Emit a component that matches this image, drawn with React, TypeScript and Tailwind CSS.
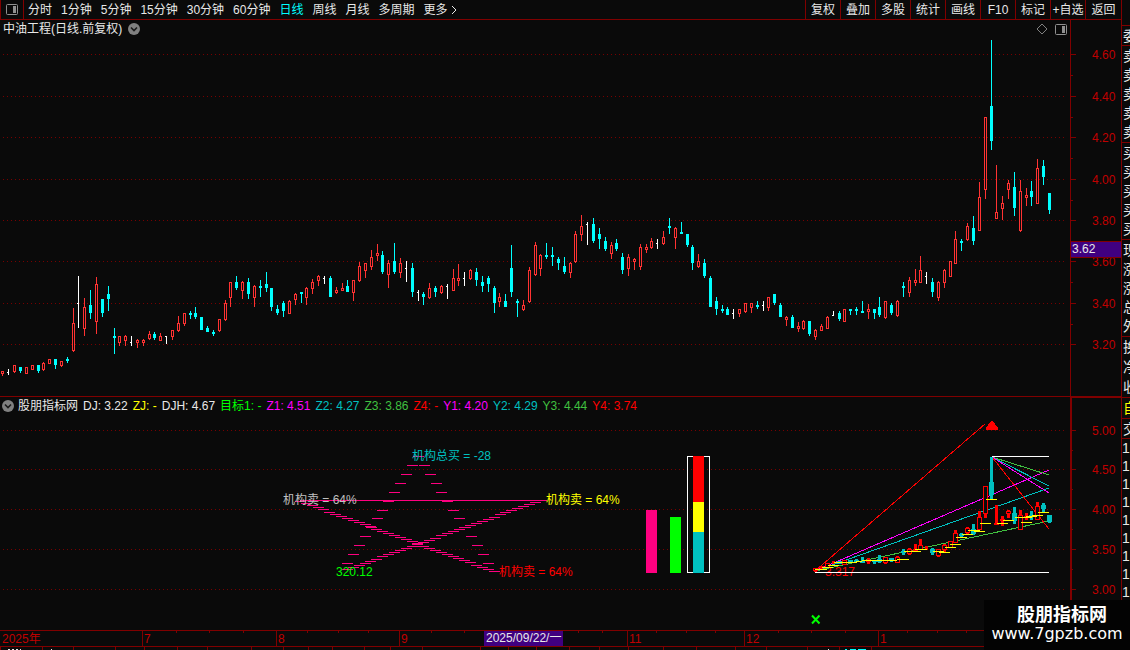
import React, { useState } from 'react';
import clsx from 'clsx';

type Kind = 'up' | 'down' | 'flat';

// x, kind, high, body top, body bottom, low (for flat: high, close, close, low)
type Candle = [number, Kind, number, number, number, number];

const periods = ['分时', '1分钟', '5分钟', '15分钟', '30分钟', '60分钟', '日线', '周线', '月线', '多周期'];
const tools = ['复权', '叠加', '多股', '统计', '画线', 'F10', '标记', '+自选', '返回'];

const candles: Candle[] = [
  [2, 'up', 371, 371, 374, 376], [8, 'flat', 369, 372, 372, 375], [14, 'up', 365, 365, 372, 373],
  [20, 'down', 367, 367, 371, 373], [26, 'up', 367, 367, 374, 374], [32, 'up', 365, 365, 370, 370],
  [38, 'down', 365, 365, 371, 373], [43, 'up', 362, 363, 370, 371], [49, 'up', 359, 359, 364, 364],
  [55, 'down', 359, 359, 365, 369], [61, 'up', 361, 361, 366, 367], [67, 'down', 357, 359, 361, 363],
  [73, 'up', 308, 323, 351, 352], [78, 'flat', 276, 303, 303, 328], [84, 'up', 298, 307, 329, 336],
  [90, 'down', 290, 305, 313, 319], [96, 'up', 277, 284, 322, 334], [102, 'down', 299, 299, 313, 317],
  [108, 'down', 286, 294, 299, 311], [114, 'down', 328, 336, 338, 354], [119, 'up', 336, 336, 343, 346],
  [125, 'up', 335, 336, 341, 346], [131, 'flat', 336, 342, 342, 346], [137, 'up', 339, 340, 343, 348],
  [143, 'up', 339, 340, 343, 346], [149, 'up', 331, 334, 339, 340], [154, 'down', 332, 334, 338, 340],
  [160, 'up', 333, 336, 341, 341], [166, 'flat', 336, 336, 336, 344], [172, 'up', 330, 330, 337, 340],
  [178, 'up', 316, 323, 331, 332], [184, 'up', 313, 313, 324, 326], [190, 'down', 311, 313, 315, 319],
  [195, 'down', 307, 313, 317, 319], [201, 'down', 317, 317, 330, 330], [207, 'down', 326, 328, 332, 332],
  [213, 'down', 330, 332, 334, 336], [219, 'up', 319, 319, 331, 332], [225, 'up', 300, 303, 320, 321],
  [230, 'up', 282, 282, 298, 307], [236, 'down', 276, 282, 288, 290], [242, 'up', 281, 282, 291, 299],
  [248, 'down', 278, 282, 294, 299], [254, 'up', 285, 286, 298, 307], [260, 'down', 280, 286, 288, 297],
  [266, 'down', 272, 284, 288, 292], [271, 'down', 288, 288, 307, 311], [277, 'down', 305, 309, 313, 315],
  [283, 'down', 301, 303, 311, 317], [289, 'up', 300, 301, 314, 314], [295, 'up', 293, 294, 300, 305],
  [301, 'down', 292, 292, 294, 303], [306, 'up', 287, 288, 298, 305], [312, 'up', 279, 282, 289, 294],
  [318, 'up', 275, 276, 281, 286], [324, 'flat', 276, 278, 278, 284], [330, 'down', 276, 278, 297, 297],
  [336, 'up', 287, 290, 293, 294], [342, 'up', 283, 288, 291, 291], [347, 'down', 280, 286, 292, 292],
  [353, 'up', 280, 280, 293, 301], [359, 'up', 262, 266, 281, 282], [365, 'up', 263, 263, 271, 278],
  [371, 'up', 250, 257, 267, 270], [377, 'up', 244, 253, 256, 261], [382, 'down', 251, 255, 272, 274],
  [388, 'up', 260, 263, 275, 288], [394, 'down', 243, 261, 272, 274], [400, 'up', 258, 263, 273, 278],
  [406, 'flat', 261, 268, 268, 282], [412, 'down', 263, 268, 292, 297], [418, 'flat', 290, 292, 292, 301],
  [423, 'down', 292, 294, 297, 305], [429, 'up', 283, 288, 298, 299], [435, 'down', 286, 288, 292, 297],
  [441, 'up', 285, 286, 293, 294], [447, 'flat', 284, 286, 286, 299], [453, 'up', 269, 278, 291, 291],
  [458, 'up', 264, 278, 281, 286], [464, 'flat', 272, 278, 278, 286], [470, 'up', 269, 270, 279, 280],
  [476, 'down', 268, 272, 280, 286], [482, 'down', 276, 282, 286, 292], [488, 'down', 276, 278, 284, 292],
  [494, 'down', 286, 288, 303, 313], [499, 'up', 293, 297, 302, 307], [505, 'down', 294, 301, 307, 307],
  [511, 'down', 245, 268, 292, 297], [517, 'down', 299, 301, 303, 317], [523, 'up', 300, 305, 310, 311],
  [529, 'up', 267, 270, 302, 303], [535, 'up', 242, 245, 275, 276], [540, 'up', 254, 255, 269, 276],
  [546, 'down', 243, 255, 257, 259], [552, 'down', 247, 255, 257, 266], [558, 'down', 257, 259, 263, 270],
  [564, 'down', 257, 266, 272, 274], [570, 'up', 262, 263, 273, 278], [575, 'up', 231, 234, 262, 263],
  [581, 'up', 215, 226, 235, 241], [587, 'flat', 222, 224, 224, 245], [593, 'down', 218, 224, 241, 243],
  [599, 'down', 228, 234, 239, 249], [605, 'down', 237, 241, 249, 251], [611, 'up', 242, 245, 254, 259],
  [616, 'down', 239, 243, 249, 251], [622, 'down', 253, 257, 270, 274], [628, 'up', 254, 257, 269, 276],
  [634, 'up', 258, 259, 262, 270], [640, 'up', 244, 247, 267, 270], [646, 'up', 244, 247, 250, 253],
  [651, 'up', 238, 241, 248, 249], [657, 'flat', 239, 243, 243, 249], [663, 'up', 231, 237, 244, 245],
  [669, 'down', 218, 226, 228, 234], [675, 'up', 227, 228, 238, 249], [681, 'down', 222, 232, 234, 234],
  [687, 'down', 234, 234, 245, 247], [692, 'down', 245, 247, 263, 270], [698, 'up', 254, 261, 267, 268],
  [704, 'down', 259, 263, 276, 278], [710, 'down', 276, 278, 307, 307], [716, 'down', 297, 301, 309, 315],
  [722, 'down', 305, 309, 311, 313], [727, 'down', 307, 309, 315, 315], [733, 'flat', 309, 313, 313, 319],
  [739, 'up', 309, 309, 314, 317], [745, 'up', 303, 303, 312, 313], [751, 'up', 303, 303, 308, 313],
  [757, 'down', 301, 305, 307, 309], [763, 'flat', 301, 305, 305, 311], [768, 'up', 297, 297, 308, 311],
  [774, 'down', 294, 294, 303, 305], [780, 'down', 303, 305, 317, 317], [786, 'up', 316, 317, 320, 326],
  [792, 'down', 315, 317, 328, 328], [798, 'up', 322, 326, 329, 332], [803, 'up', 320, 321, 329, 330],
  [809, 'down', 321, 321, 334, 336], [815, 'up', 329, 330, 337, 340], [821, 'up', 324, 326, 331, 331],
  [827, 'up', 316, 317, 329, 329], [833, 'flat', 311, 315, 315, 316], [839, 'down', 311, 313, 319, 321],
  [844, 'up', 309, 309, 322, 322], [850, 'down', 309, 309, 311, 315], [856, 'down', 307, 309, 311, 315],
  [862, 'down', 301, 311, 313, 313], [868, 'up', 304, 309, 312, 319], [874, 'down', 309, 309, 313, 319],
  [879, 'down', 297, 307, 315, 317], [885, 'up', 301, 301, 318, 319], [891, 'down', 303, 305, 313, 315],
  [897, 'up', 300, 301, 316, 317], [903, 'down', 282, 286, 288, 297], [909, 'up', 277, 280, 293, 297],
  [915, 'up', 269, 280, 283, 286], [920, 'up', 256, 270, 283, 283], [926, 'flat', 272, 276, 276, 284],
  [932, 'down', 278, 282, 292, 297], [938, 'up', 281, 282, 298, 301], [944, 'up', 269, 270, 283, 288],
  [950, 'up', 261, 261, 277, 277], [955, 'up', 231, 239, 264, 264], [961, 'down', 239, 241, 243, 251],
  [967, 'up', 223, 226, 240, 241], [973, 'down', 216, 228, 241, 245], [979, 'up', 182, 197, 231, 231],
  [985, 'up', 117, 117, 190, 199], [991, 'down', 40, 106, 141, 150], [996, 'up', 165, 212, 219, 219],
  [1002, 'up', 196, 203, 209, 220], [1008, 'up', 180, 183, 190, 199], [1014, 'down', 172, 187, 208, 216],
  [1020, 'up', 180, 191, 231, 232], [1026, 'up', 188, 195, 198, 206], [1031, 'down', 181, 191, 197, 206],
  [1037, 'up', 159, 168, 204, 204], [1043, 'down', 160, 166, 177, 185], [1049, 'down', 193, 193, 210, 214],
];

const mainLevels: [string, number][] = [
  ['4.60', 54], ['4.40', 96], ['4.20', 137], ['4.00', 179],
  ['3.80', 220], ['3.60', 261], ['3.40', 303], ['3.20', 344],
];
const subLevels: [string, number][] = [['5.00', 430], ['4.50', 469], ['4.00', 509], ['3.50', 549], ['3.00', 589]];

const indicators = [
  { text: 'DJ: 3.22', color: 'text-[#e8e8e8]' },
  { text: 'ZJ: -', color: 'text-[#ffff00]' },
  { text: 'DJH: 4.67', color: 'text-[#e8e8e8]' },
  { text: '目标1: -', color: 'text-[#00ff00]' },
  { text: 'Z1: 4.51', color: 'text-[#ff00ff]' },
  { text: 'Z2: 4.27', color: 'text-[#00c0c0]' },
  { text: 'Z3: 3.86', color: 'text-[#40c040]' },
  { text: 'Z4: -', color: 'text-[#ff0000]' },
  { text: 'Y1: 4.20', color: 'text-[#ff00ff]' },
  { text: 'Y2: 4.29', color: 'text-[#00c0c0]' },
  { text: 'Y3: 4.44', color: 'text-[#40c040]' },
  { text: 'Y4: 3.74', color: 'text-[#ff0000]' },
];

// x1, x2, y
const costSteps: [number, number, number][] = [
  [815, 827, 569], [822, 833, 567], [828, 839, 565], [834, 857, 562], [856, 862, 561], [862, 897, 560],
  [897, 909, 559], [904, 921, 551], [915, 927, 549], [933, 944, 551], [939, 950, 552], [945, 956, 547],
  [950, 961, 544], [956, 967, 537], [962, 973, 534], [968, 980, 530], [974, 985, 531], [980, 991, 523],
  [986, 997, 499], [997, 1008, 523], [1003, 1014, 520], [1015, 1032, 517], [1021, 1032, 522],
  [1026, 1037, 516], [1032, 1043, 515], [1038, 1049, 512],
];

const fanLines: [number, number, number, number, string][] = [
  [815, 571, 985, 424, '#ff0000'],
  [815, 571, 1049, 470, '#ff00ff'],
  [815, 571, 1049, 488, '#00c0c0'],
  [815, 571, 1049, 521, '#40c040'],
  [992, 457, 1049, 475, '#40c040'],
  [992, 457, 1049, 486, '#00c0c0'],
  [992, 457, 1049, 493, '#ff00ff'],
  [992, 457, 1049, 529, '#ff0000'],
];

const months: [string, number][] = [['7', 142], ['8', 276], ['9', 399], ['11', 627], ['12', 744], ['1', 878]];
const weekTicks = [
  176, 209, 243, 307, 338, 368, 431, 464, 578, 602, 656, 686, 715, 778, 811, 845, 907, 937, 966,
];
const footerTicks = [
  0, 42, 73, 115, 144, 177, 207, 251, 283, 308, 332, 364, 390, 422, 480, 508, 536, 569,
  599, 628, 663, 696, 735, 766, 807, 839, 871,
];

const quoteGroups = [
  { rows: [''], className: 'h-[26px] text-[#e8e8e8]' },
  { rows: ['委'], className: 'h-5 text-[#e8e8e8]' },
  { rows: ['卖', '卖', '卖', '卖', '卖'], className: 'h-[97px] text-[#e8e8e8]' },
  { rows: ['买', '买', '买', '买', '买'], className: 'h-[97px] text-[#e8e8e8]' },
  { rows: ['现', '涨', '涨', '总', '外'], className: 'h-[97px] text-[#e8e8e8]' },
  { rows: ['换', '净', '收'], className: 'h-[61px] text-[#e8e8e8]' },
  { rows: ['自'], className: 'h-[21px] text-[#ffff00]' },
  { rows: ['交'], className: 'h-5 text-[#e8e8e8]' },
];

function ChevronBadge() {
  return (
    <svg width="12" height="12" viewBox="0 0 12 12" className="shrink-0">
      <circle cx="6" cy="6" r="6" fill="#808080" />
      <path d="M3 4.5 6 7.5 9 4.5" fill="none" stroke="#1a1a1a" strokeWidth="1.6" />
    </svg>
  );
}

function PanelIcon() {
  return (
    <svg width="12" height="11" viewBox="0 0 12 11" className="shrink-0">
      <rect x="0.5" y="0.5" width="11" height="10" rx="1" fill="none" stroke="#909090" />
      <rect x="7" y="2" width="3" height="7" fill="#909090" />
    </svg>
  );
}

function Grid({ levels }: { levels: [string, number][] }) {
  return (
    <>
      {levels.map(([label, y]) => (
        <g key={label}>
          <line x1="3" x2="1067" y1={y + 0.5} y2={y + 0.5} stroke="#780000" strokeDasharray="1 3" />
          <rect x="1071" y={y} width="5" height="1" fill="#800000" />
          <text x="1092" y={y + 5} fill="#c00000">
            {label}
          </text>
        </g>
      ))}
      {levels.slice(1).map(([label, y], i) => (
        <rect key={label} x="1071" y={Math.round((y + levels[i][1]) / 2)} width="2" height="1" fill="#800000" />
      ))}
    </>
  );
}

function MainCandle({ candle }: { candle: Candle }) {
  const [x, kind, high, top, bottom, low] = candle;

  if (kind === 'flat') {
    return (
      <g fill="#ffffff">
        <rect x={x} y={high} width="1" height={low - high} />
        <rect x={x - 1} y={top} width="1" height="1" />
      </g>
    );
  }

  const color = kind === 'up' ? '#ff3232' : '#00ffff';
  return (
    <g>
      <rect x={x} y={high} width="1" height={low - high} fill={color} />
      <rect x={x - 1} y={top} width="3" height={bottom - top} fill={color} />
      {kind === 'up' && bottom - top > 2 && (
        <rect x={x} y={top + 1} width="1" height={bottom - top - 2} fill="#0a0a0a" />
      )}
    </g>
  );
}

// same candle on the lower panel's price scale
function SubCandle({ candle }: { candle: Candle }) {
  const scale = (y: number) => Math.round(573.4 - (344.3 - y) * 0.384);
  const [x, kind] = candle;
  const [high, top, bottom, low] = candle.slice(2).map((v) => scale(v as number));
  const color = kind === 'down' ? '#00c0c0' : '#ff0000';
  const height = Math.max(bottom - top, 2);

  return (
    <g>
      <rect x={x - 1} y={high} width="3" height={Math.max(low - high, 3)} fill={color} />
      {kind !== 'flat' && <rect x={x - 2} y={top} width="5" height={height} fill={color} />}
      {kind === 'up' && height > 2 && <rect x={x - 1} y={top + 1} width="3" height={height - 2} fill="#0a0a0a" />}
    </g>
  );
}

function Star() {
  const dashes: [number, number][] = [];
  for (let i = 0; i <= 33; i++) {
    dashes.push([295 + i * 5.87, 501 + i * 2.12]);
  }
  for (let i = 0; i <= 32; i++) {
    dashes.push([342 + i * 5.87, 569 - i * 2.1]);
  }
  for (let i = 0; i <= 12; i++) {
    dashes.push([413 - i * 5.92, 456 + i * 8.92]);
    dashes.push([413 + i * 5.87, 456 + i * 8.92]);
  }

  return (
    <g fill="#ff0080">
      <rect x="300" y="500" width="247" height="1" />
      {dashes.map(([x, y], i) => (
        <rect key={i} x={Math.round(x)} y={Math.round(y)} width="11" height="1" />
      ))}
    </g>
  );
}

export default function App() {
  const [period, setPeriod] = useState('日线');

  return (
    <div className="relative flex w-full overflow-hidden bg-[#0a0a0a] text-xs leading-4 text-[#e8e8e8] [font-family:'Liberation_Sans','Noto_Sans_CJK_SC',sans-serif]">
      <main className="min-w-0 flex-1">
        <nav className="flex h-5 items-center border-b border-[#800000] whitespace-nowrap">
          <button
            type="button"
            aria-label="侧栏"
            className="flex h-full w-6 items-center justify-center border-r border-l border-[#800000]"
          >
            <PanelIcon />
          </button>
          <div className="flex flex-1 gap-[9px] pl-1">
            {periods.map((item) => (
              <button
                key={item}
                type="button"
                onClick={() => setPeriod(item)}
                className={clsx(period === item && 'text-[#00ffff]')}
              >
                {item}
              </button>
            ))}
            <button type="button" className="flex items-center gap-[3px]">
              更多
              <svg width="6" height="10" viewBox="0 0 6 10">
                <path d="M1 1 5 5 1 9" fill="none" stroke="#e8e8e8" />
              </svg>
            </button>
          </div>
          {tools.map((item) => (
            <button
              key={item}
              type="button"
              className="h-full w-[35px] border-l border-[#800000] text-center last:w-9"
            >
              {item}
            </button>
          ))}
        </nav>

        <div className="flex h-[18px]">
          <div className="flex flex-1 items-center gap-1.5 pl-[3px]">
            <h1>中油工程(日线.前复权)</h1>
            <ChevronBadge />
          </div>
          <div className="flex items-center gap-[7px] pr-[3px]">
            <svg width="12" height="12" viewBox="0 0 12 12">
              <path d="M6 1 11 6 6 11 1 6Z" fill="none" stroke="#808080" />
            </svg>
            <PanelIcon />
          </div>
          <div className="w-[51px] border-l border-[#800000]" />
        </div>

        <svg viewBox="0 38 1121 358" className="block h-auto w-full text-xs" shapeRendering="crispEdges">
          <rect x="1070" y="38" width="1" height="358" fill="#800000" />
          <Grid levels={mainLevels} />
          {candles.map((candle) => (
            <MainCandle key={candle[0]} candle={candle} />
          ))}
          <rect x="1071" y="241" width="50" height="17" fill="#400080" />
          <rect x="1071" y="241" width="50" height="1" fill="#800000" />
          <rect x="1071" y="257" width="50" height="1" fill="#800000" />
          <text x="1072" y="253" fill="#e8e8e8">
            3.62
          </text>
        </svg>

        <div className="flex h-[18px] border-t border-[#800000]">
          <div className="flex flex-1 items-center gap-[5px] pl-0.5 whitespace-nowrap">
            <div className="flex items-center gap-1">
              <ChevronBadge />
              <h2>股朋指标网</h2>
            </div>
            {indicators.map((item) => (
              <span key={item.text} className={item.color}>
                {item.text}
              </span>
            ))}
          </div>
          <div className="w-[51px] border-t border-l-2 border-[#800000]" />
        </div>

        <svg viewBox="0 414 1121 216" className="block h-auto w-full text-xs" shapeRendering="crispEdges">
          <rect x="1070" y="414" width="2" height="216" fill="#800000" />
          <Grid levels={subLevels} />
          <Star />
          <text x="412" y="460" fill="#00c0c0">机构总买 = -28</text>
          <text x="283" y="504" fill="#c0c0c0">机构卖 = 64%</text>
          <text x="546" y="504" fill="#ffff00">机构卖 = 64%</text>
          <text x="499" y="576" fill="#ff0000">机构卖 = 64%</text>
          <text x="336" y="576" fill="#00ff00">320.12</text>

          <rect x="646" y="510" width="11" height="63" fill="#ff0080" />
          <rect x="670" y="517" width="11" height="56" fill="#00ff00" />
          <rect x="687.5" y="456.5" width="22" height="116" fill="none" stroke="#ffffff" />
          <rect x="693" y="456" width="11" height="46" fill="#ff0000" />
          <rect x="693" y="502" width="11" height="30" fill="#ffff00" />
          <rect x="693" y="532" width="11" height="41" fill="#00c0c0" />

          <text x="825" y="576" fill="#ff0000">3.317</text>
          <rect x="815" y="572" width="234" height="1" fill="#ffffff" />
          <rect x="992" y="456" width="57" height="1" fill="#ffffff" />
          {fanLines.map(([x1, y1, x2, y2, color], i) => (
            <line key={i} x1={x1} y1={y1} x2={x2} y2={y2} stroke={color} />
          ))}
          {candles
            .filter((candle) => candle[0] >= 815)
            .map((candle) => (
              <SubCandle key={candle[0]} candle={candle} />
            ))}
          {costSteps.map(([x1, x2, y], i) => (
            <rect key={i} x={x1} y={y} width={x2 - x1} height="1" fill="#ffff00" />
          ))}
          <path d="M991 421H993L998 428V430H986V428Z" fill="#ff0000" />
          <path
            d="M812 615.5 819.5 623.5M819.5 615.5 812 623.5"
            stroke="#00ff00"
            strokeWidth="2"
            shapeRendering="auto"
          />
        </svg>

        <svg viewBox="0 630 1121 20" className="block h-auto w-full text-xs" shapeRendering="crispEdges">
          <rect x="0" y="630" width="1121" height="1" fill="#800000" />
          <rect x="0" y="646" width="1121" height="1" fill="#800000" />
          <text x="2" y="643" fill="#c00000">2025年</text>
          {months.map(([label, x]) => (
            <g key={label}>
              <rect x={x} y="630" width="1" height="16" fill="#800000" />
              <text x={x + 2} y="643" fill="#c00000">
                {label}
              </text>
            </g>
          ))}
          {weekTicks.map((x) => (
            <rect key={x} x={x} y="631" width="1" height="2" fill="#800000" />
          ))}
          <rect x="484" y="631" width="79" height="15" fill="#400080" />
          <text x="486" y="642" fill="#e8e8e8">2025/09/22/一</text>
          {footerTicks.map((x) => (
            <rect key={x} x={x} y="647" width="1" height="3" fill="#800000" />
          ))}
          <path d="M8 649.5h2M12 649.5h2M16 649.5h2M20 649.5h1M51 649.5h1M828 649.5h1" stroke="#e8e8e8" />
          <path d="M845 649.5h2M850 649.5h6M858 649.5h8" stroke="#00ffff" />
        </svg>
      </main>

      <aside className="h-[650px] w-[9px] shrink-0 overflow-hidden border-l border-[#800000] text-sm">
        {quoteGroups.map((group, i) => (
          <div key={i} className={clsx('flex flex-col border-b border-[#800000] pl-px', group.className)}>
            {group.rows.map((row, j) => (
              <div key={j} className="flex flex-1 items-center leading-[18px] whitespace-nowrap">
                {row}
              </div>
            ))}
          </div>
        ))}
        {Array.from({ length: 9 }, (_, i) => (
          <div key={i} className="h-[18px] leading-[18px]">
            1
          </div>
        ))}
      </aside>

      <div className="absolute right-0 bottom-0 h-[50px] w-[146px] bg-[#030303] pt-1 text-center text-white">
        <div className="pl-2.5 text-lg leading-[22px] font-bold">股朋指标网</div>
        <div className="text-base leading-4 [font-family:'DejaVu_Sans',sans-serif]">www.7gpzb.com</div>
      </div>
    </div>
  );
}
